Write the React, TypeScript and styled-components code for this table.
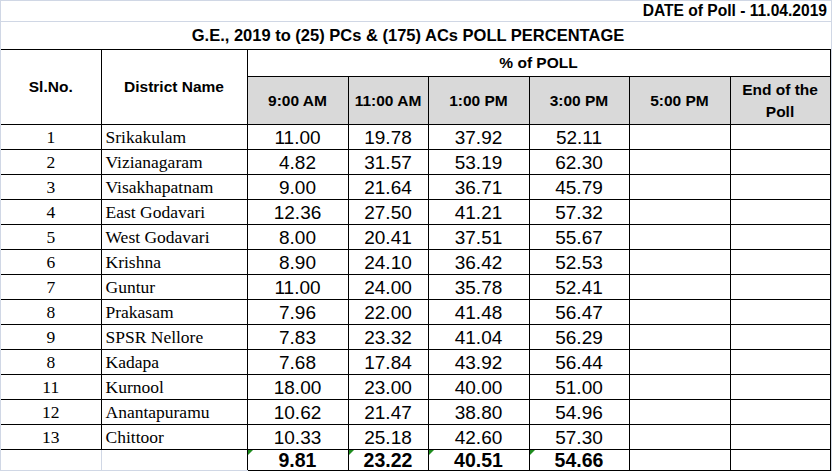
import React from 'react';
import styled, { createGlobalStyle } from 'styled-components';

const GRID = '#d0d7e5';

const Global = createGlobalStyle`
  html, body { margin: 0; padding: 0; background: #fff; }
  body { width: 832px; height: 471px; overflow: hidden; }
`;

const Sheet = styled.div`
  width: 832px;
  height: 471px;
  box-sizing: border-box;
  border-left: 1px solid ${GRID};
  border-top: 1px solid ${GRID};
  border-right: 1px solid ${GRID};
  font-family: "Liberation Sans", Arial, sans-serif;
  color: #000;
  display: flex;
  flex-direction: column;
`;

const DateRow = styled.div`
  height: 20px;
  flex: none;
  border-bottom: 1px solid ${GRID};
  display: flex;
  align-items: center;
  justify-content: flex-end;
  padding-right: 4px;
  font-weight: 700;
  font-size: 15.6px;
`;

const TitleRow = styled.div`
  height: 27px;
  flex: none;
  display: flex;
  align-items: center;
  justify-content: center;
  padding-right: 16px;
  font-weight: 700;
  font-size: 16.5px;
  white-space: nowrap;
`;

const Table = styled.table`
  width: 829px;
  table-layout: fixed;
  border-collapse: collapse;
  border-spacing: 0;
`;

const Row = styled.tr<{ $h: number }>`
  height: ${(p) => p.$h}px;
`;

const Head = styled.th<{ $shade?: boolean }>`
  padding: 0;
  border: 1px solid #000;
  background: ${(p) => (p.$shade ? '#d9d9d9' : '#fff')};
  font-weight: 700;
  font-size: 15.5px;
  line-height: 22px;
  text-align: center;
  vertical-align: middle;
`;

const SlCell = styled.td`
  padding: 1px 0 0;
  border: 1px solid #000;
  border-left: none;
  font-family: "Liberation Serif", "Times New Roman", serif;
  font-size: 17.5px;
  text-align: center;
  vertical-align: middle;
`;

const NameCell = styled.td`
  padding: 1px 0 0 4px;
  border: 1px solid #000;
  font-family: "Liberation Serif", "Times New Roman", serif;
  font-size: 17.5px;
  text-align: left;
  vertical-align: middle;
  white-space: nowrap;
`;

const NumCell = styled.td<{ $bold?: boolean; $flag?: boolean }>`
  position: relative;
  padding: 1px 0 0;
  border: 1px solid #000;
  font-size: ${(p) => (p.$bold ? '19.5px' : '19px')};
  font-weight: ${(p) => (p.$bold ? 700 : 400)};
  text-align: center;
  vertical-align: middle;
  line-height: 19px;
  &::before {
    content: '';
    display: ${(p) => (p.$flag ? 'block' : 'none')};
    position: absolute;
    top: 0;
    left: 0;
    width: 0;
    height: 0;
    border-top: 5px solid #1e8c1e;
    border-right: 5px solid transparent;
  }
`;

const BlankCell = styled.td<{ $edge?: boolean }>`
  padding: 0;
  border: 1px solid ${GRID};
  border-left: none;
  border-right: 1px solid ${(p) => (p.$edge ? '#000' : GRID)};
`;

const rows: [string, string, string, string, string, string][] = [
  ['1', 'Srikakulam', '11.00', '19.78', '37.92', '52.11'],
  ['2', 'Vizianagaram', '4.82', '31.57', '53.19', '62.30'],
  ['3', 'Visakhapatnam', '9.00', '21.64', '36.71', '45.79'],
  ['4', 'East Godavari', '12.36', '27.50', '41.21', '57.32'],
  ['5', 'West Godavari', '8.00', '20.41', '37.51', '55.67'],
  ['6', 'Krishna', '8.90', '24.10', '36.42', '52.53'],
  ['7', 'Guntur', '11.00', '24.00', '35.78', '52.41'],
  ['8', 'Prakasam', '7.96', '22.00', '41.48', '56.47'],
  ['9', 'SPSR Nellore', '7.83', '23.32', '41.04', '56.29'],
  ['8', 'Kadapa', '7.68', '17.84', '43.92', '56.44'],
  ['11', 'Kurnool', '18.00', '23.00', '40.00', '51.00'],
  ['12', 'Anantapuramu', '10.62', '21.47', '38.80', '54.96'],
  ['13', 'Chittoor', '10.33', '25.18', '42.60', '57.30'],
];

const totals = ['9.81', '23.22', '40.51', '54.66'];
const widths = [100, 146, 101, 80, 101, 100, 101, 100];

export default function App() {
  return (
    <>
      <Global />
      <Sheet>
        <DateRow>DATE of Poll - 11.04.2019</DateRow>
        <TitleRow>G.E., 2019 to (25) PCs &amp; (175) ACs POLL PERCENTAGE</TitleRow>
        <Table>
          <colgroup>
            {widths.map((w, i) => (
              <col key={i} style={{ width: w }} />
            ))}
          </colgroup>
          <thead>
            <Row $h={27}>
              <Head rowSpan={2} style={{ borderLeft: 'none' }}>Sl.No.</Head>
              <Head rowSpan={2}>District Name</Head>
              <Head colSpan={6}>% of POLL</Head>
            </Row>
            <Row $h={48}>
              <Head $shade>9:00 AM</Head>
              <Head $shade>11:00 AM</Head>
              <Head $shade>1:00 PM</Head>
              <Head $shade>3:00 PM</Head>
              <Head $shade>5:00 PM</Head>
              <Head $shade>
                End of the
                <br />
                Poll
              </Head>
            </Row>
          </thead>
          <tbody>
            {rows.map((r, i) => (
              <Row $h={25} key={i}>
                <SlCell>{r[0]}</SlCell>
                <NameCell>{r[1]}</NameCell>
                <NumCell>{r[2]}</NumCell>
                <NumCell>{r[3]}</NumCell>
                <NumCell>{r[4]}</NumCell>
                <NumCell>{r[5]}</NumCell>
                <NumCell />
                <NumCell />
              </Row>
            ))}
            <Row $h={20}>
              <BlankCell />
              <BlankCell $edge />
              {totals.map((t, i) => (
                <NumCell $bold $flag key={i}>
                  {t}
                </NumCell>
              ))}
              <NumCell />
              <NumCell />
            </Row>
          </tbody>
        </Table>
      </Sheet>
    </>
  );
}
